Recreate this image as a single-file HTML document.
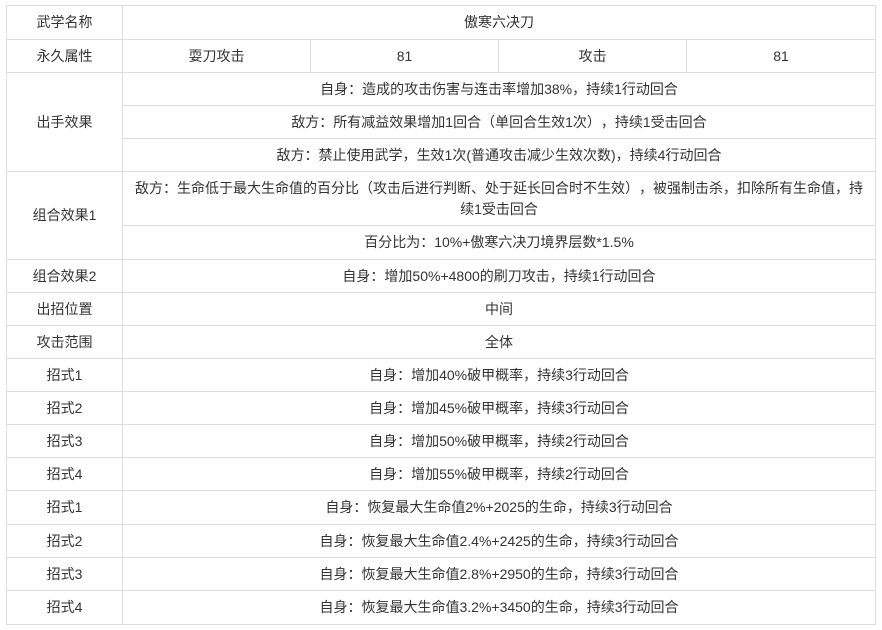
<!DOCTYPE html>
<html><head><meta charset="utf-8"><style>
body{margin:0;background:#fff;width:882px;height:630px;position:relative;overflow:hidden;font-family:"Liberation Sans","Noto Sans CJK SC",sans-serif;font-size:14px;color:#333;text-spacing-trim:space-all;}
.c{position:absolute;box-sizing:border-box;border-right:1px solid #ddd;border-bottom:1px solid #ddd;display:flex;align-items:center;justify-content:center;text-align:center;line-height:21px;white-space:nowrap;}
#frame{position:absolute;left:6px;top:5px;width:870px;height:620px;box-sizing:border-box;border-left:1px solid #ddd;border-top:1px solid #ddd;}
</style></head><body>
<div id="frame"></div>
<div id="t"></div>
<script>
var cells=[
[6,5,122,39,"武学名称"],[122,5,875,39,"傲寒六决刀"],
[6,39,122,72,"永久属性"],[122,39,310,72,"耍刀攻击"],[310,39,498,72,"81"],[498,39,686,72,"攻击"],[686,39,875,72,"81"],
[6,72,122,171,"出手效果"],
[122,72,875,105,"自身：造成的攻击伤害与连击率增加38%，持续1行动回合"],
[122,105,875,138,"敌方：所有减益效果增加1回合（单回合生效1次），持续1受击回合"],
[122,138,875,171,"敌方：禁止使用武学，生效1次(普通攻击减少生效次数)，持续4行动回合"],
[6,171,122,259,"组合效果1"],
[122,171,875,225,"敌方：生命低于最大生命值的百分比（攻击后进行判断、处于延长回合时不生效），被强制击杀，扣除所有生命值，持<br>续1受击回合"],
[122,225,875,259,"百分比为：10%+傲寒六决刀境界层数*1.5%"],
[6,259,122,292,"组合效果2"],[122,259,875,292,"自身：增加50%+4800的刷刀攻击，持续1行动回合"],
[6,292,122,325,"出招位置"],[122,292,875,325,"中间"],
[6,325,122,358,"攻击范围"],[122,325,875,358,"全体"],
[6,358,122,391,"招式1"],[122,358,875,391,"自身：增加40%破甲概率，持续3行动回合"],
[6,391,122,424,"招式2"],[122,391,875,424,"自身：增加45%破甲概率，持续3行动回合"],
[6,424,122,457,"招式3"],[122,424,875,457,"自身：增加50%破甲概率，持续2行动回合"],
[6,457,122,490,"招式4"],[122,457,875,490,"自身：增加55%破甲概率，持续2行动回合"],
[6,490,122,524,"招式1"],[122,490,875,524,"自身：恢复最大生命值2%+2025的生命，持续3行动回合"],
[6,524,122,557,"招式2"],[122,524,875,557,"自身：恢复最大生命值2.4%+2425的生命，持续3行动回合"],
[6,557,122,590,"招式3"],[122,557,875,590,"自身：恢复最大生命值2.8%+2950的生命，持续3行动回合"],
[6,590,122,624,"招式4"],[122,590,875,624,"自身：恢复最大生命值3.2%+3450的生命，持续3行动回合"]
];
var h="";
cells.forEach(function(c){h+='<div class="c" style="left:'+(c[0]+1)+'px;top:'+(c[1]+1)+'px;width:'+(c[2]-c[0])+'px;height:'+(c[3]-c[1])+'px">'+'<span>'+c[4]+'</span></div>';});
document.getElementById("t").innerHTML=h;
</script>
</body></html>
